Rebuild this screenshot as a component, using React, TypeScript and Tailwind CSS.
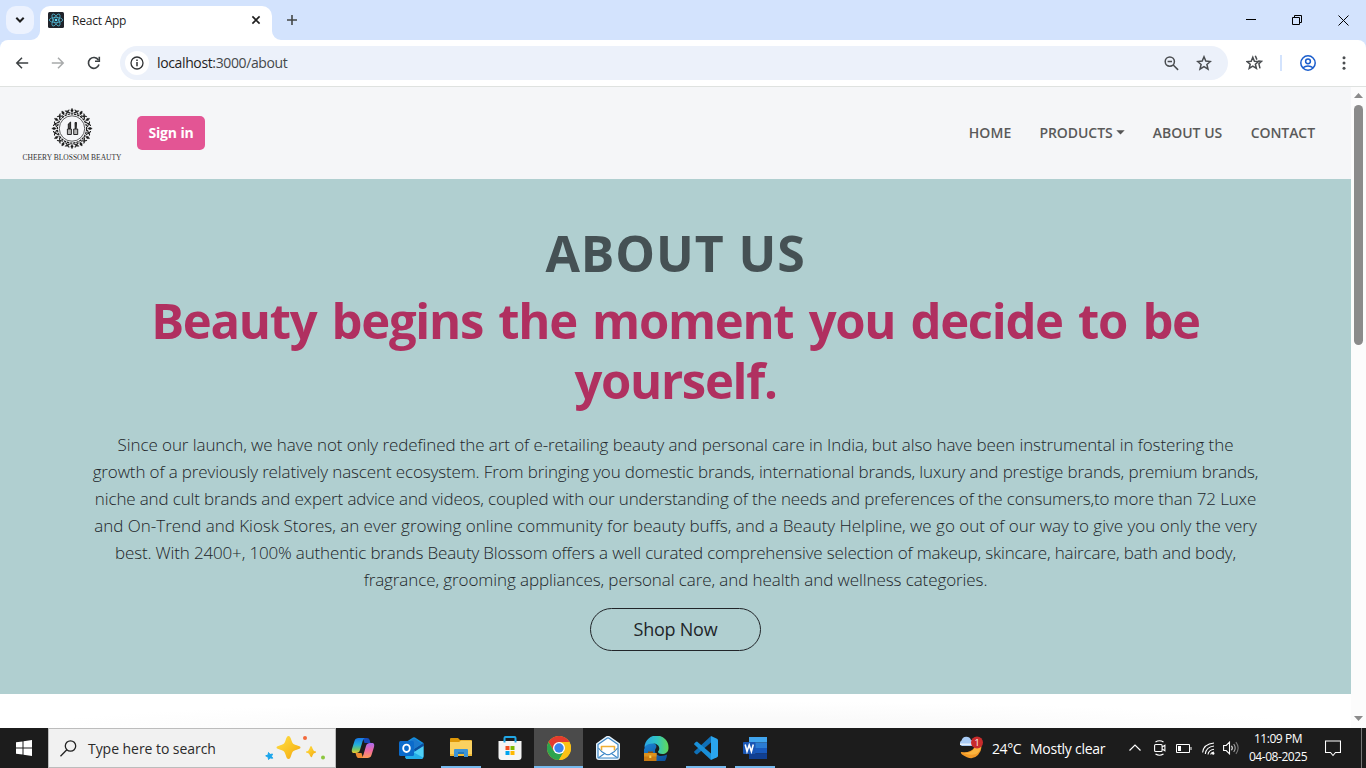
import type { ReactNode } from "react";

function TabStrip() {
  return (
    <div className="flex h-10 shrink-0 bg-[#d3e3fd]">
      <div className="flex w-10 items-center pl-1.5">
        <div className="grid h-7 w-7 place-items-center rounded-[10px] bg-[#ecf2fe]">
          <svg width="10" height="8" viewBox="0 0 10 8" fill="none" stroke="#1f1f1f" strokeWidth="2"><path d="M1.3 1.8 5 5.5 8.7 1.8" /></svg>
        </div>
      </div>
      <div className="relative mt-1.5 flex w-[232px] items-center rounded-t-[10px] bg-white pb-[6px] pl-2 pr-[11px]">
        <svg className="absolute bottom-0 -left-[9px]" width="9" height="9" viewBox="0 0 9 9"><path d="M9 0v9H0A9 9 0 0 0 9 0" fill="#fff" /></svg>
        <svg className="absolute bottom-0 -right-[9px]" width="9" height="9" viewBox="0 0 9 9"><path d="M0 0v9h9A9 9 0 0 1 0 0" fill="#fff" /></svg>
        <svg width="16" height="16" viewBox="0 0 16 16">
          <rect width="16" height="16" rx="1.5" fill="#20232a" />
          <g fill="none" stroke="#4fb4cf" strokeWidth=".8">
            <ellipse cx="8" cy="8" rx="6.7" ry="2.6" />
            <ellipse cx="8" cy="8" rx="6.7" ry="2.6" transform="rotate(60 8 8)" />
            <ellipse cx="8" cy="8" rx="6.7" ry="2.6" transform="rotate(120 8 8)" />
          </g>
          <circle cx="8" cy="8" r="1.3" fill="#61dafb" />
        </svg>
        <span className="ml-2 pt-0.5 text-[12px] tracking-[-0.22px] text-[#1f1f1f]">React App</span>
        <svg className="ml-auto" width="10" height="10" viewBox="0 0 10 10" stroke="#1f1f1f" strokeWidth="1.6"><path d="m1.4 1.4 7.2 7.2M8.6 1.4 1.4 8.6" /></svg>
      </div>
      <svg className="ml-[14px] mt-[14px]" width="12" height="12" viewBox="0 0 12 12" stroke="#444746" strokeWidth="1.6"><path d="M6 1v10M1 6h10" /></svg>
      <div className="ml-auto flex items-center gap-9 pr-[17px]">
        <svg width="10" height="10" viewBox="0 0 10 10" stroke="#000"><path d="M0 4.5h10" /></svg>
        <svg width="10" height="10" viewBox="0 0 10 10" fill="none" stroke="#000"><path d="M.5 2.5h7v7h-7zM2.5 2.5v-2h7v7h-2" /></svg>
        <svg width="11" height="11" viewBox="0 0 11 11" stroke="#000"><path d="m.5.5 10 10M10.5.5l-10 10" /></svg>
      </div>
    </div>
  );
}

function Toolbar() {
  return (
    <div className="h-[47px] shrink-0 bg-[#d3e3fd]">
      <div className="flex h-full items-center rounded-t-[8px] border-b border-[#dfe2e0] bg-white pl-[15px]">
        <svg width="14" height="12" viewBox="0 0 14 12" fill="none" stroke="#3c4043" strokeWidth="1.5"><path d="M13.2 6H2M7 .8 1.8 6 7 11.2" /></svg>
        <svg className="ml-[22px]" width="14" height="12" viewBox="0 0 14 12" fill="none" stroke="#a8aaab" strokeWidth="1.5"><path d="M.8 6H12M7 .8 12.2 6 7 11.2" /></svg>
        <svg className="ml-[22px]" width="14" height="14" viewBox="0 0 14 14" fill="none" stroke="#3c4043" strokeWidth="1.6"><path d="M12 8.6A5.4 5.4 0 1 1 11.4 4" /><path d="M12.3.8v4.4H8" /></svg>
        <div className="ml-[19px] flex h-[34px] w-[1108px] items-center rounded-full bg-[#ecf1fa] pl-[5px] pr-4">
          <div className="grid h-6 w-6 place-items-center rounded-full bg-white">
            <svg width="14" height="14" viewBox="0 0 14 14" fill="none" stroke="#303234" strokeWidth="1.3"><circle cx="7" cy="7" r="6" /><path d="M7 6v4.2M7 3.6v1.4" strokeWidth="1.5" /></svg>
          </div>
          <span className="ml-2 pb-0.5 text-[14px] tracking-[-0.37px] text-[#45484b]"><span className="text-[#1f1f1f]">localhost</span>:3000/about</span>
          <svg className="ml-auto" width="15" height="15" viewBox="0 0 15 15" fill="none" stroke="#4a4d50" strokeWidth="1.5"><circle cx="5.8" cy="5.6" r="4.6" /><path d="m9.2 9 4.9 4.9M3.6 5.6H8" /></svg>
          <svg className="ml-[17px]" width="16" height="16" viewBox="0 0 16 16" fill="none" stroke="#4a4d50" strokeWidth="1.5"><path d="m8 1.8 1.8 4.3 4.6.4-3.5 3 1.1 4.6L8 11.6l-4 2.5 1.1-4.6-3.5-3 4.6-.4z" /></svg>
        </div>
        <svg className="ml-[18px]" width="17" height="16" viewBox="0 0 17 16" fill="none" stroke="#4a4d50" strokeWidth="1.5"><path d="m6.800 2.300 1.600 3.900 4.100.4-3.100 2.700 1 4.100L6.800 11.200l-3.600 2.200 1-4.100-3.100-2.700 4.100-.4z" /><path d="m9.300.8 1.600 3.800M12.200 6l3.400.3-2.700 2.500 1.100 4.600" /></svg>
        <div className="ml-[17px] h-4 w-0.5 bg-[#d3e3fd]" />
        <svg className="ml-[18px]" width="16" height="16" viewBox="0 0 16 16" fill="none" stroke="#1a5dcc" strokeWidth="1.5"><circle cx="8" cy="8" r="7.2" /><circle cx="8" cy="6.3" r="2.4" /><path d="M3 12.7c2.8-2.4 7.2-2.4 10 0" /></svg>
        <svg className="ml-[26px]" width="4" height="14" viewBox="0 0 4 14" fill="#4a4d50"><circle cx="2" cy="1.8" r="1.5" /><circle cx="2" cy="7" r="1.5" /><circle cx="2" cy="12.2" r="1.5" /></svg>
      </div>
    </div>
  );
}

const petals = Array.from({ length: 12 }, (_, i) => i * 30);

function Logo() {
  return (
    <svg width="100" height="54" viewBox="0 0 100 54">
      <g transform="translate(50 20.5)" fill="none" stroke="#1b1b1b">
        <circle r="12.7" strokeWidth=".7" />
        <circle r="14.6" strokeWidth="1.2" strokeDasharray="2.4 .8" />
        {petals.map((a) => (
          <g key={a} transform={`rotate(${a})`} strokeWidth="1.1">
            <path d="M0-20.2 1.2-18 0-15.800-1.200-18z" fill="#1b1b1b" strokeWidth=".5" />
            <path d="M-1.500-15.500c-3.200-.2-3.200-3-1-3M1.500-15.500c3.200-.2 3.200-3 1-3" />
            <path d="M-4.800-17.800q.8 1.300 0 2.600" strokeWidth=".9" />
          </g>
        ))}
      </g>
      <g stroke="#151515" strokeWidth=".9">
        <path d="M45.400 21h4v5.500h-4zM51.700 21h4v5.500h-4z" fill="#b5b5b5" />
        <path d="M46.300 20.500v-4.500l2.300-2v6.500zM53.200 20.500l-.2-6h1.500l-.3 6z" fill="#444" />
      </g>
      <text x="0.500" y="51.500" fontSize="7.200" textLength="99" lengthAdjust="spacingAndGlyphs" className="fill-[#333] font-['Liberation_Serif',serif]">CHEERY BLOSSOM BEAUTY</text>
    </svg>
  );
}

function Navbar() {
  return (
    <nav className="flex h-[92px] items-center bg-[#f5f6f8] pl-[22px] pr-9">
      <div className="mt-1"><Logo /></div>
      <button className="ml-[15px] h-[34px] w-[68px] rounded-[5px] bg-[#e35594] pb-0.5 text-[14px] font-bold tracking-[-0.15px] text-white">Sign in</button>
      <div className="ml-auto flex items-center pb-0.5 text-[14px] font-semibold text-[#5a5a5a]">
        <a className="tracking-[0.1px]">HOME</a>
        <a className="ml-7 flex items-center gap-[3px] tracking-[-0.05px]">
          PRODUCTS
          <svg width="9" height="5" viewBox="0 0 9 5" fill="#555"><path d="M.3.3h8.400L4.500 4.500z" /></svg>
        </a>
        <a className="ml-7">ABOUT US</a>
        <a className="ml-[28.500px] tracking-[-0.080px]">CONTACT</a>
      </div>
    </nav>
  );
}

function Hero() {
  return (
    <section className="flex h-[515px] flex-col items-center bg-[#b0cfd0] pt-11 text-center whitespace-nowrap">
      <h1 className="text-[50px] leading-[60px] font-bold tracking-[0.9px] text-[#455154]">ABOUT US</h1>
      <h2 className="mt-[7px] text-[49px] leading-[60px] font-bold text-[#b03060]">
        <span className="block tracking-[-1.3px] [word-spacing:3.9px]">Beauty begins the moment you decide to be</span>
        <span className="block tracking-[-1.3px]">yourself.</span>
      </h2>
      <p className="mt-[21px] text-[17px] leading-[27px] font-light text-[#212529]">
        <span className="block tracking-[-0.09px]">Since our launch, we have not only redefined the art of e-retailing beauty and personal care in India, but also have been instrumental in fostering the</span>
        <span className="block tracking-[-0.13px]">growth of a previously relatively nascent ecosystem. From bringing you domestic brands, international brands, luxury and prestige brands, premium brands,</span>
        <span className="block tracking-[-0.14px]">niche and cult brands and expert advice and videos, coupled with our understanding of the needs and preferences of the consumers,to more than 72 Luxe</span>
        <span className="block tracking-[-0.01px]">and On-Trend and Kiosk Stores, an ever growing online community for beauty buffs, and a Beauty Helpline, we go out of our way to give you only the very</span>
        <span className="block tracking-[-0.16px]">best. With 2400+, 100% authentic brands Beauty Blossom offers a well curated comprehensive selection of makeup, skincare, haircare, bath and body,</span>
        <span className="block tracking-[-0.09px]">fragrance, grooming appliances, personal care, and health and wellness categories.</span>
      </p>
      <button className="mt-[15px] h-[43px] w-[171px] rounded-full border border-[#212529] text-[18px] tracking-[-0.25px] text-[#212529]">Shop Now</button>
    </section>
  );
}

function Scrollbar() {
  return (
    <div className="flex w-[15px] flex-col items-center bg-[#fcfcfc]">
      <svg className="mt-1.5" width="9" height="5" viewBox="0 0 9 5" fill="#8b8b8b"><path d="M4.500 0 9 5H0z" /></svg>
      <div className="mt-[7px] h-[240px] w-[9px] rounded-full bg-[#8b8b8b]" />
      <svg className="mt-auto mb-[7px]" width="9" height="5" viewBox="0 0 9 5" fill="#8b8b8b"><path d="M4.500 5 0 0h9z" /></svg>
    </div>
  );
}

function Slot({ children, open, active }: { children: ReactNode; open?: boolean; active?: boolean }) {
  return (
    <div className={`flex w-[49px] flex-col items-center ${active ? "bg-[#4b4b4b]" : ""}`}>
      <div className="grid h-[38px] place-items-center pt-0.5">{children}</div>
      {(open || active) && <div className={`h-0.5 bg-[#76b9ed] ${active ? "w-full" : "w-10"}`} />}
    </div>
  );
}

function Copilot() {
  return (
    <svg width="24" height="22" viewBox="0 0 24 22">
      <defs>
        <linearGradient id="cpA" x1="0" y1="0" x2="0" y2="1"><stop stopColor="#1677e8" /><stop offset=".45" stopColor="#23b0dc" /><stop offset=".75" stopColor="#6fc66b" /><stop offset="1" stopColor="#f1c92c" /></linearGradient>
        <linearGradient id="cpB" x1="0" y1="0" x2="0" y2="1"><stop stopColor="#a96bf0" /><stop offset=".5" stopColor="#ef6aa2" /><stop offset="1" stopColor="#ff9a55" /></linearGradient>
      </defs>
      <path d="M12 1h4c1.500 0 2.200.8 2.700 2.300l.8 2.700h-6z" fill="#1749b8" />
      <path d="M7.500 1H14c-1.500.5-2 2-2.500 3.500L9 13c-.7 2.300-2 3-4 3H3C.7 16 .5 14 1 12L3.500 4C4.200 1.800 5.500 1 7.500 1" fill="url(#cpA)" />
      <path d="M12 21H8c-1.500 0-2.200-.8-2.700-2.300L4.500 16h6z" fill="#f08b32" />
      <path d="M16.500 21H10c1.500-.5 2-2 2.500-3.500L15 9c.7-2.300 2-3 4-3h2c2.300 0 2.500 2 2 4l-2.500 8c-.7 2.200-2 3-4 3" fill="url(#cpB)" />
    </svg>
  );
}

function Outlook() {
  return (
    <svg width="25" height="24" viewBox="0 0 25 24">
      <path d="M4 8 14 1.500q1-.6 2 0L24.500 7v13q0 3-3 3H9q-3 0-3-3z" fill="#1490df" />
      <path d="m15 13 9.500-6v3.500L16 16z" fill="#0b4e9f" />
      <path d="M8 7 14 3q1-.6 2 0l6.500 4.500L15 13z" fill="#1c78cc" />
      <path d="M24.500 10v10q0 3-3 3H9q-2 0-2.600-1.500z" fill="#4fd0f5" />
      <path d="m14 16 10 5.500q-1 1.500-3 1.500H9q-2 0-2.800-1.500z" fill="#23aee9" />
      <rect y="5" width="15" height="15" rx="1.500" fill="#0b6bcb" />
      <ellipse cx="7.500" cy="12.300" rx="3.300" ry="3.700" fill="none" stroke="#fff" strokeWidth="1.900" />
    </svg>
  );
}

function Explorer() {
  return (
    <svg width="22" height="20" viewBox="0 0 22 20">
      <path d="M0 1q0-1 1-1h7l2 2h11q1 0 1 1v3H0z" fill="#dd9708" />
      <path d="M0 4h9l2-1.500h10q1 0 1 1V17q0 1-1 1H1q-1 0-1-1z" fill="#fbd160" />
      <path d="M0 16h22v2H0z" fill="#efb935" />
      <path d="M4 19v-7q0-1 1-1h12q1 0 1 1v7h-4v-3H8v3z" fill="#3c94d6" />
      <path d="M8 14h6v2H8z" fill="#2478b8" />
    </svg>
  );
}

function Store() {
  return (
    <svg width="24" height="24" viewBox="0 0 24 24">
      <path d="M6.500 7V2q0-1 1-1h9q1 0 1 1v5" fill="none" stroke="#21a7e5" strokeWidth="2" />
      <path d="M.5 5h23v16q0 3-3 3h-17q-3 0-3-3z" fill="#f5f5f5" />
      <path d="M5.500 5h2v1.500h-2zM16.500 5h2v1.500h-2z" fill="#21a7e5" />
      <path d="M7.500 10h4v4h-4z" fill="#f25022" /><path d="M12.500 10h4v4h-4z" fill="#7fba00" />
      <path d="M7.500 15h4v4h-4z" fill="#00a4ef" /><path d="M12.500 15h4v4h-4z" fill="#ffb900" />
    </svg>
  );
}

function Chrome() {
  return (
    <svg width="24" height="24" viewBox="0 0 24 24">
      <circle cx="12" cy="12" r="12" fill="#fbc116" />
      <path d="M12 6h10.400A12 12 0 0 0 1.600 6l5.200 9L12 12z" fill="#e33b2e" />
      <path d="M1.600 6A12 12 0 0 0 12 24l5.200-9L12 12 6.800 15z" fill="#2da44e" />
      <path d="M12 6h10.400A12 12 0 0 1 12 24l5.200-9z" fill="#fbc116" />
      <circle cx="12" cy="12" r="6" fill="#fff" /><circle cx="12" cy="12" r="4.700" fill="#3b82ee" />
    </svg>
  );
}

function Mail() {
  return (
    <svg width="24" height="24" viewBox="0 0 24 24" strokeLinejoin="round">
      <path d="M1 8 10.500 1.300q1.500-1 3 0L23 8v13q0 2-2 2H3q-2 0-2-2z" fill="#fff" stroke="#e8f2fa" strokeWidth="2" />
      <path d="M2 8.500 11 2.200q1-.7 2 0l9 6.300V21q0 1-1 1H3q-1 0-1-1z" fill="#fff" stroke="#3c87c7" strokeWidth="1.200" />
      <path d="M5.500 14.500v-4h13v4" fill="none" stroke="#f0ae35" strokeWidth="1.600" />
      <path d="m2.500 12 3 3.500 4.500 2.700q2 1 4 0l4.500-2.700 3-3.500M3 21.500l5.500-4M21 21.500l-5.500-4" fill="none" stroke="#3c87c7" strokeWidth="1.100" />
    </svg>
  );
}

function Edge() {
  return (
    <svg width="25" height="25" viewBox="0 0 25 25">
      <defs>
        <linearGradient id="edA" x1="0" x2="1"><stop stopColor="#2aa4e5" /><stop offset=".5" stopColor="#30c4c5" /><stop offset="1" stopColor="#62d957" /></linearGradient>
        <linearGradient id="edB" x1="0" x2=".6" y2="1"><stop stopColor="#1b85d5" /><stop offset="1" stopColor="#0b4d98" /></linearGradient>
      </defs>
      <path d="M.5 12.500C.5 8 5 6 9 7c3 .7 4 3 3 5-2.500 3 0 8 5 8 2.500 0 4.500-.8 6-1.500A12 12 0 1 1 .5 12.500" fill="url(#edB)" />
      <path d="M.5 11A12 12 0 0 1 24.500 12c0 4-3 6-6.200 6-3 0-4.300-1.300-4.300-2.200 0-.7 1.300-1.300 1.300-3.300C15.300 9.500 12.500 7.500 9 7.500 5.500 7.500 2.500 8.500.5 11" fill="url(#edA)" />
      <path d="M0 17h12.500v8H0z" fill="#c87a12" /><path d="M4 15.500h5V17H4z" fill="#8d4f0a" /><path d="M0 17h12.500v3.500H0z" fill="#dc911c" /><path d="M5.300 19.500h2v2.500h-2z" fill="#ffd34d" />
    </svg>
  );
}

function Code() {
  return (
    <svg width="24" height="24" viewBox="0 0 24 24">
      <path d="m17 0 6 2.700q1 .5 1 1.500v15.600q0 1-1 1.500L17 24z" fill="#2aa5ee" />
      <path d="M17 0v6.500L3 18.500 1.800 18 .3 16.500q-.5-.7.200-1.300z" fill="#0f70b7" />
      <path d="M17 24v-6.500L3 5.500 1.800 6 .3 7.500q-.5.700.200 1.300z" fill="#1a90d8" />
    </svg>
  );
}

function Word() {
  return (
    <svg width="24" height="22" viewBox="0 0 24 22">
      <path d="M6 0h18v5.500H6z" fill="#41a5ee" /><path d="M6 5.500h18V11H6z" fill="#2b7cd3" /><path d="M6 11h18v5.500H6z" fill="#185abd" /><path d="M6 16.500h18V22H6z" fill="#103f91" />
      <rect y="5" width="12.500" height="12" rx="1" fill="#1a56b4" />
      <path d="m2.200 7.500 1.800 7 2.200-6.500 2.200 6.500 1.900-7" fill="none" stroke="#fff" strokeWidth="1.600" />
    </svg>
  );
}

function Taskbar() {
  return (
    <footer className="flex h-10 shrink-0 bg-[#1c1c1c] text-white">
      <div className="grid w-12 place-items-center">
        <svg width="16" height="16" viewBox="0 0 16 16" fill="#fff"><path d="M0 2.300 6.500 1.400v6.100H0zM7.500 1.200 16 0v7.500H7.500zM0 8.500h6.500v6.100L0 13.700zM7.500 8.500H16V16l-8.500-1.200z" /></svg>
      </div>
      <div className="flex w-72 items-center border border-[#bcbcbc] bg-[#f1f1f1] pl-[11px] text-[#2b2b2b]">
        <svg width="17" height="17" viewBox="0 0 17 17" fill="none" stroke="#222" strokeWidth="1.300"><circle cx="10.500" cy="6" r="5.200" /><path d="M6.800 9.800.5 16.300" /></svg>
        <span className="ml-[11px] text-[14px] tracking-[-0.05px]">Type here to search</span>
        <svg className="ml-auto mr-[9px]" width="62" height="26" viewBox="0 0 62 26">
          <defs><linearGradient id="star" x1="0" y1="0" x2="1" y2="1"><stop stopColor="#ffe04a" /><stop offset=".6" stopColor="#f9c022" /><stop offset="1" stopColor="#ef9f16" /></linearGradient></defs>
          <path d="M24.500 1c1.500 0 2 1.500 3 4.500s1.500 3.500 4.500 4.500 4.500 1.500 4.500 2.500-1.500 1.500-4.500 2.500-3.500 1.500-4.500 4.500-1.500 4.500-3 4.500-2-1.500-3-4.500-1.500-3.500-4.500-4.500-4.500-1.500-4.500-2.500 1.500-1.500 4.500-2.500 3.500-1.500 4.500-4.500 1.500-4.500 3-4.500" fill="url(#star)" />
          <path d="M47 11q1 0 1.500 2.500t3.500 3v1q-3 .5-3.500 3T47 22t-1.500-2.500-3.500-2v-1q3-.5 3.500-3T47 11" fill="url(#star)" />
          <path d="m4.500 17.500 1.500 2 2.500-.500-1 2.300 1.200 1.900-2.500-.2-1.700 1.500-.4-2.500-2.400-1.200 2.400-.8z" fill="#1aa5ec" stroke="#1aa5ec" />
          <circle cx="41" cy="3" r="2" fill="#f2693b" /><circle cx="59" cy="22.500" r="2" fill="#8cc63f" />
        </svg>
      </div>
      <div className="ml-0.5 flex">
        <Slot><Copilot /></Slot>
        <Slot><Outlook /></Slot>
        <Slot open><Explorer /></Slot>
        <Slot><Store /></Slot>
        <Slot active><Chrome /></Slot>
        <Slot><Mail /></Slot>
        <Slot><Edge /></Slot>
        <Slot open><Code /></Slot>
        <Slot open><Word /></Slot>
      </div>
      <div className="ml-auto flex items-center">
        <svg className="mr-px" width="25" height="24" viewBox="0 0 25 24">
          <path d="M20.500 5q4.500 7.500-1.500 14T3 18.500q-1.500-1.500-1-2.500 10 1 13-4t1.500-7z" fill="#f49a27" />
          <path d="M20.500 5q3.500 5-.5 10.500T4 17q9 .5 11.500-5t1-7z" fill="#fcb53f" />
          <path d="M3 10a3 3 0 0 1-.5-5.500A5 5 0 0 1 12 4a3 3 0 0 1 1 6z" fill="#a9cbf5" /><path d="M1 7.500h13v1.500H1z" fill="#e6f0fc" />
          <circle cx="18" cy="6.500" r="6" fill="#c92c2c" /><text x="18" y="9.700" textAnchor="middle" fontSize="9" fill="#fff">1</text>
        </svg>
        <span className="ml-[7px] w-[38px] text-[14px] tracking-[-0.4px]">24°C</span>
        <span className="w-[76px] text-[14px] tracking-[-0.27px] whitespace-nowrap">Mostly clear</span>
        <svg className="ml-[23px]" width="12" height="8" viewBox="0 0 12 8" fill="none" stroke="#fff" strokeWidth="1.200"><path d="m.5 6.500 5.500-5.500 5.500 5.500" /></svg>
        <svg className="ml-[13px]" width="12" height="16" viewBox="0 0 12 16" fill="none" stroke="#fff" strokeWidth="1.100"><rect x=".6" y="4.500" width="7.500" height="7" rx="1" /><path d="m8.100 7 2.800-1.700v5.400L8.100 9M1.500 2Q5.500-.4 9.500 2M1.500 14q4 2.400 8 0" /></svg>
        <svg className="ml-[10px]" width="16" height="9" viewBox="0 0 16 9" fill="none" stroke="#fff"><path d="M.5.5h13v8H.5zM15 3v3" /><path d="M2 2h3v5H2z" fill="#fff" stroke="none" /></svg>
        <svg className="ml-[10px]" width="13" height="13" viewBox="0 0 13 13" fill="none" stroke="#fff" strokeWidth="1.100"><path d="M.6 10.500Q1.500 2 12 1M3.300 12Q4 5 12 4M6 12.500Q6.500 8 12 7.200M8.700 12.500Q9 10.500 12 10" /><circle cx="11.200" cy="11.500" r="1.200" fill="#fff" stroke="none" /></svg>
        <svg className="ml-2" width="16" height="14" viewBox="0 0 16 14" fill="none" stroke="#fff" strokeWidth="1.100"><path d="M.6 4.500h2.600L6.500 1.200v11.600L3.200 9.500H.6zM8.500 4.800q1.500 2.200 0 4.400" /><path d="M10.700 3q3 4 0 8" stroke="#aaa" /><path d="M12.900 1.200q4.500 5.800 0 11.600" stroke="#777" /></svg>
        <div className="ml-[9px] flex w-[60px] flex-col items-center text-[12px] leading-[18px] tracking-[-0.45px] whitespace-nowrap"><span>11:09 PM</span><span>04-08-2025</span></div>
        <svg className="ml-[17px] mr-[20px]" width="16" height="17" viewBox="0 0 16 17" fill="none" stroke="#fff" strokeWidth="1.100"><path d="M.5 1h15v11.500h-5L8 15.500l-2.500-3h-5z" /></svg>
        <div className="mr-1 h-10 w-px bg-[#777]" />
      </div>
    </footer>
  );
}

export default function App() {
  return (
    <div className="flex h-[768px] w-[1366px] flex-col overflow-hidden bg-white font-['Open_Sans',sans-serif]">
      <TabStrip />
      <Toolbar />
      <main className="flex min-h-0 flex-1">
        <div className="flex w-[1351px] flex-col">
          <Navbar />
          <Hero />
          <div className="flex-1 bg-[radial-gradient(ellipse_48%_80%_at_50%_100%,#fafafa_40%,#ffffff_100%)]" />
        </div>
        <Scrollbar />
      </main>
      <Taskbar />
    </div>
  );
}
